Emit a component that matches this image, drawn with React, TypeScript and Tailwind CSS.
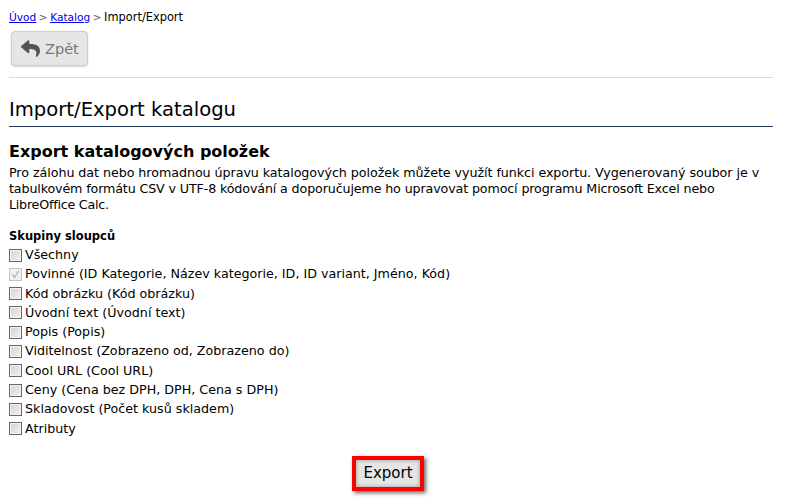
import React from 'react';
import { FaReply } from 'react-icons/fa';

const groups = [
  { label: 'Všechny' },
  { label: 'Povinné (ID Kategorie, Název kategorie, ID, ID variant, Jméno, Kód)', locked: true },
  { label: 'Kód obrázku (Kód obrázku)' },
  { label: 'Úvodní text (Úvodní text)' },
  { label: 'Popis (Popis)' },
  { label: 'Viditelnost (Zobrazeno od, Zobrazeno do)' },
  { label: 'Cool URL (Cool URL)' },
  { label: 'Ceny (Cena bez DPH, DPH, Cena s DPH)' },
  { label: 'Skladovost (Počet kusů skladem)' },
  { label: 'Atributy' },
];

const Check = ({ locked }: { locked?: boolean }) => (
  <span
    className={
      locked
        ? 'flex h-[13px] w-[13px] shrink-0 items-center justify-center border border-[#c4c4c4] bg-[#f0f0f0]'
        : 'flex h-[13px] w-[13px] shrink-0 border border-[#666] bg-gradient-to-br from-[#d4d4d4] to-[#f0f0f0] shadow-[inset_0_0_0_1px_#f4f4f4]'
    }
  >
    {locked && (
      <svg width="9" height="9" viewBox="0 0 9 9" fill="none" stroke="#b5b5b5" strokeWidth="1.4">
        <path d="M1.5 4.5 L3.5 7.5 L7.5 1" />
      </svg>
    )}
  </span>
);

export default function App() {
  return (
    <div className="h-[498px] w-[790px] overflow-hidden bg-white font-['DejaVu_Sans','Liberation_Sans',sans-serif] text-[12.7px] leading-4 text-black">
      <div className="ml-[9px] mr-[17px]">
        <div className="flex items-baseline gap-[2.5px] pt-[11px] text-[10.6px] leading-3">
          <a className="text-[#0000ee] underline">Úvod</a>
          <span className="text-[#666]">&gt;</span>
          <a className="text-[#0000ee] underline">Katalog</a>
          <span className="text-[#666]">&gt;</span>
          <span className="text-[11.4px]">Import/Export</span>
        </div>
        <div className="ml-[2px] mt-[8px] flex h-[35px] w-[77px] items-center gap-[5px] rounded border border-[#ccc] bg-[#e6e6e6] pl-[9px] text-[14.5px] text-[#777] shadow-[0_1px_2px_rgba(0,0,0,0.15)]">
          <FaReply className="h-[19px] w-[19px] text-[#555]" />
          <span>Zpět</span>
        </div>
        <div className="mt-[11px] border-t border-[#ddd]" />
        <h1 className="mt-[20px] border-b border-[#1f3a5a] pb-[4px] text-[19.6px] leading-[24px]">Import/Export katalogu</h1>
        <h2 className="mt-[15px] text-[16px] font-bold leading-5">Export katalogových položek</h2>
        <p className="mt-[3px]">
          <span className="block whitespace-nowrap tracking-[-0.06px]">
            Pro zálohu dat nebo hromadnou úpravu katalogových položek můžete využít funkci exportu. Vygenerovaný soubor je v
          </span>
          <span className="block whitespace-nowrap tracking-[-0.14px]">
            tabulkovém formátu CSV v UTF-8 kódování a doporučujeme ho upravovat pomocí programu Microsoft Excel nebo
          </span>
          <span className="block whitespace-nowrap tracking-[-0.24px]">LibreOffice Calc.</span>
        </p>
        <div className="mt-[15px] text-[11.5px] font-bold">Skupiny sloupců</div>
        <ul className="mt-[3px] flex flex-col gap-[3.3px]">
          {groups.map((g) => (
            <li key={g.label} className="flex items-center gap-[3px]">
              <Check locked={g.locked} />
              <span>{g.label}</span>
            </li>
          ))}
        </ul>
        <div className="mt-[19px] flex justify-center">
          <button className="mr-[6px] h-[35px] w-[72px] border-4 border-[#f00] bg-[#e6e6e6] text-[15px] shadow-[2px_2px_4px_rgba(0,0,0,0.6),inset_0_0_4px_rgba(0,0,0,0.35)]">
            Export
          </button>
        </div>
      </div>
    </div>
  );
}
